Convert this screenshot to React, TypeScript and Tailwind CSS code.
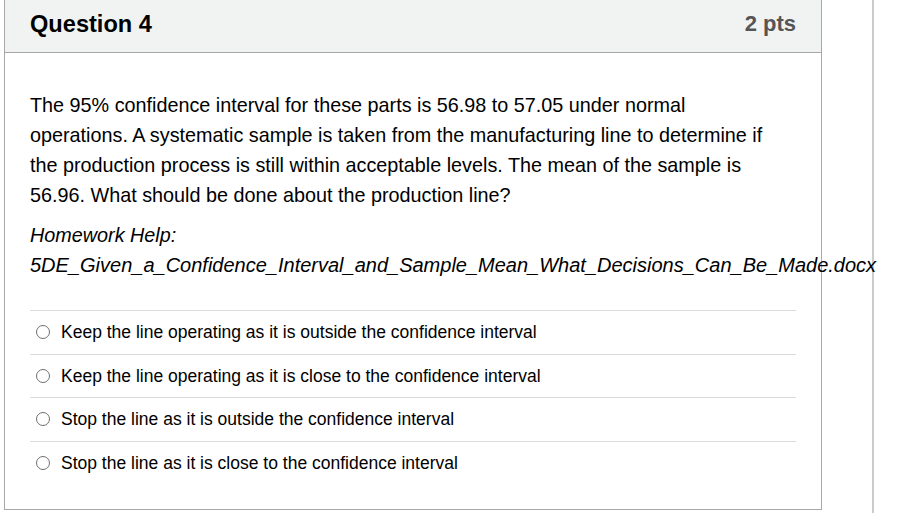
const options = [
  'Keep the line operating as it is outside the confidence interval',
  'Keep the line operating as it is close to the confidence interval',
  'Stop the line as it is outside the confidence interval',
  'Stop the line as it is close to the confidence interval',
];

export default function App() {
  return (
    <div className="relative h-[513px] w-[913px] overflow-hidden bg-white font-['Liberation_Sans',Arial,sans-serif] text-black">
      <div className="flex h-full">
        <div className="relative z-10 ml-[4px] w-[818px] shrink-0 self-start border border-t-0 border-[#a8a8a8]">
          {/* header */}
          <div className="flex h-[53px] items-start justify-between border-b border-[#a8a8a8] bg-[#f1f3f3] px-[25px] pt-[10px]">
            <h2 className="text-[23.6px] font-bold leading-[28px]">Question 4</h2>
            <span className="text-[22px] font-bold leading-[28px] text-[#555]">2 pts</span>
          </div>

          {/* body */}
          <div className="px-[25px] pt-[37px] pb-[25px]">
            <p className="w-[750px] text-[19.8px] leading-[30px]">
              The 95% confidence interval for these parts is 56.98 to 57.05 under normal operations. A systematic sample
              is taken from the manufacturing line to determine if the production process is still within acceptable
              levels. The mean of the sample is 56.96. What should be done about the production line?
            </p>
            <p className="mt-[10px] text-[19.8px] italic leading-[30px]">
              Homework Help:
              <br />
              <span className="text-[20px]">5DE_Given_a_Confidence_Interval_and_Sample_Mean_What_Decisions_Can_Be_Made.docx</span>
            </p>

            <ul className="mt-[30px] w-[766px]">
              {options.map((o, i) => (
                <li
                  key={i}
                  className="flex h-[43.5px] items-center gap-[11px] border-t border-[#dcdcdc] pl-[6px] text-[17.5px]"
                >
                  <span className="h-[14px] w-[14px] shrink-0 rounded-full border border-[#6f6f6f] bg-white" />
                  {o}
                </li>
              ))}
            </ul>
          </div>
        </div>

        <div className="ml-[50px] h-full w-[2px] bg-[#cccccc]" />
      </div>
    </div>
  );
}
